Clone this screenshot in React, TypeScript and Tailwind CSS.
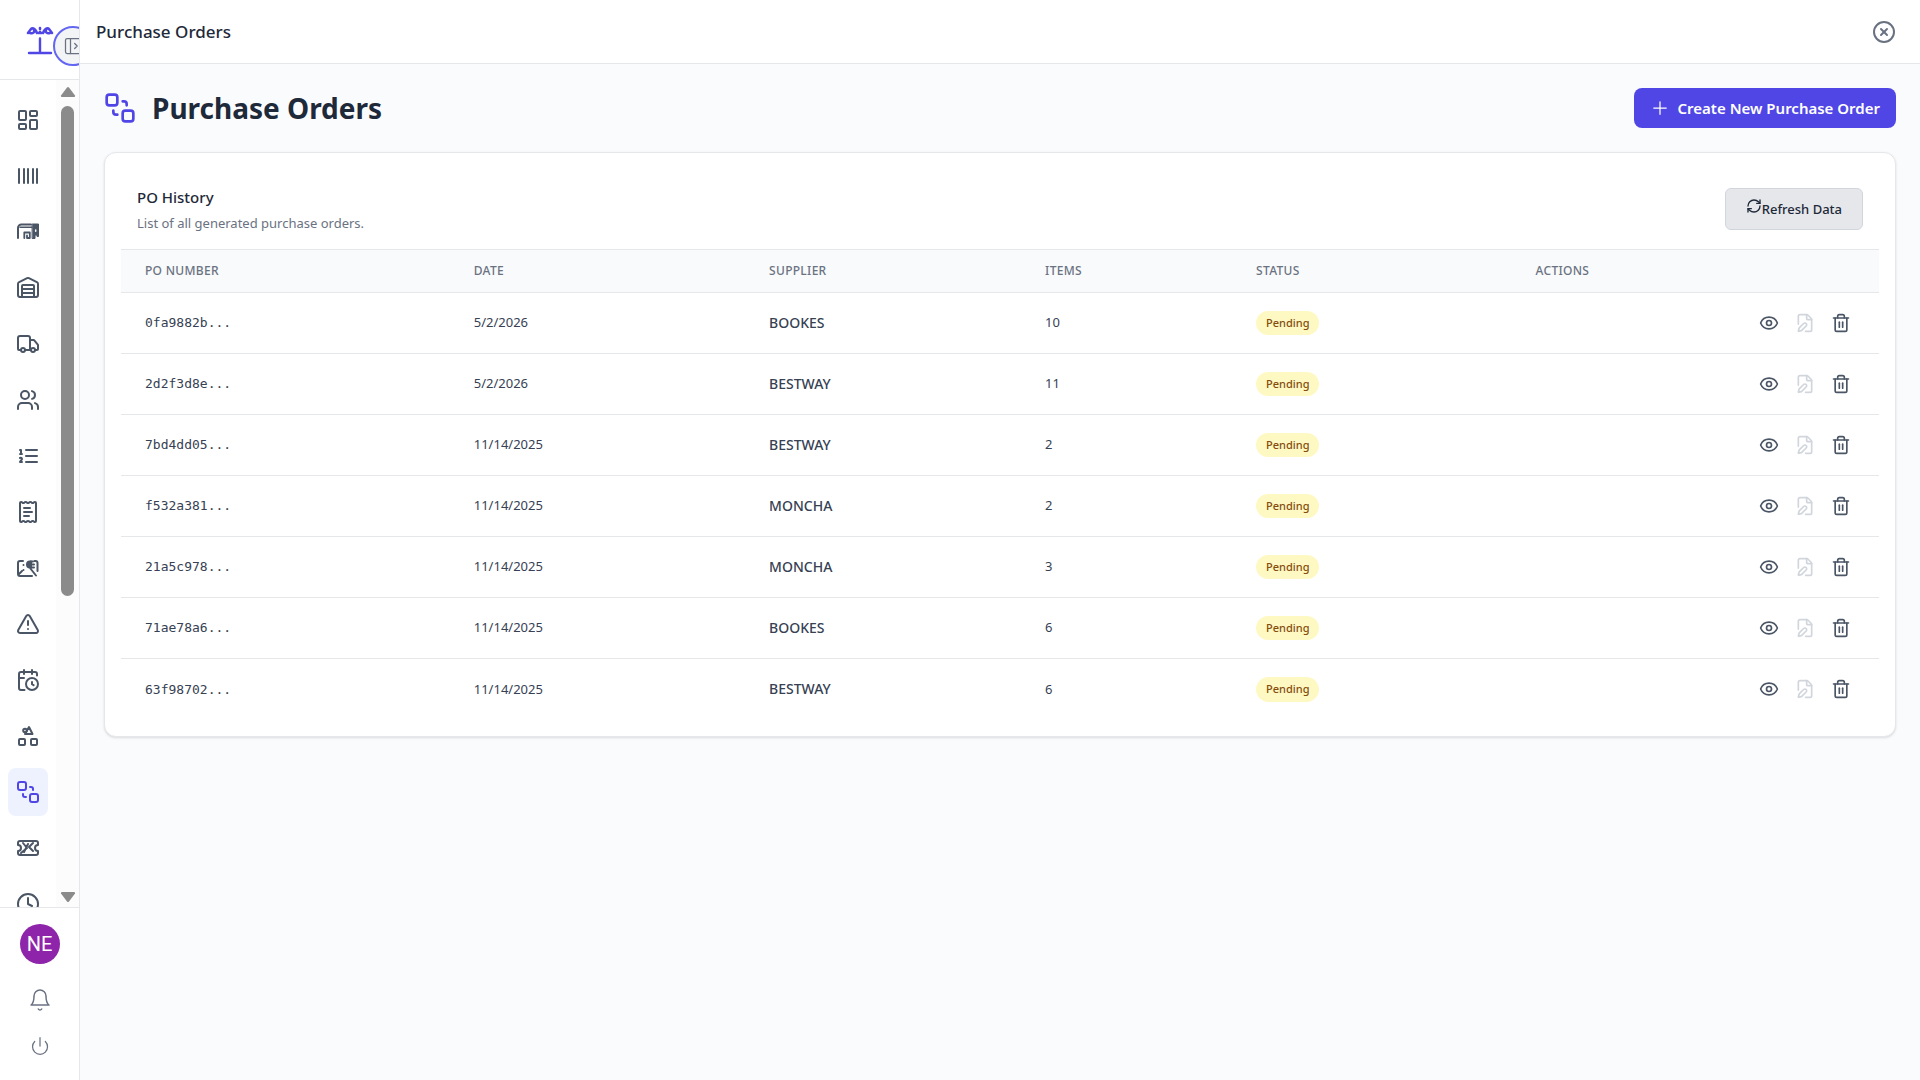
import {
  Barcode,
  CalendarClock,
  CircleX,
  Clock,
  Eye,
  FilePen,
  LayoutDashboard,
  PanelLeftOpen,
  Power,
  ReceiptText,
  RefreshCw,
  Trash2,
  TriangleAlert,
  Truck,
  Users,
  Warehouse,
} from "lucide-react";
import type { ReactNode } from "react";
import { HiOutlinePlus } from "react-icons/hi2";

type IconProps = { className?: string; strokeWidth?: number; children?: ReactNode };

function Svg({ className = "size-6", strokeWidth = 2, children }: IconProps) {
  return (
    <svg
      className={className}
      viewBox="0 0 24 24"
      fill="none"
      stroke="currentColor"
      strokeWidth={strokeWidth}
      strokeLinecap="round"
      strokeLinejoin="round"
      aria-hidden="true"
    >
      {children}
    </svg>
  );
}

function OrdersIcon({ className }: IconProps) {
  return (
    <Svg className={className}>
      <rect x="2" y="2" width="8" height="8" rx="2" />
      <rect x="14" y="14" width="8" height="8" rx="2" />
      <path d="M14 7h1a2 2 0 0 1 2 2v1" />
      <path d="M7 14v1a2 2 0 0 0 2 2h1" />
    </Svg>
  );
}

function StoreIcon() {
  return (
    <Svg>
      <path d="M2 18V8a3.5 3.5 0 0 1 3.5-3.5H15" />
      <path d="M4 7.2h12" strokeWidth="1.5" />
      <path d="M8.3 18v-5.5h5.5V18H11v-2.5" strokeWidth="1.8" />
      <path d="M16.5 4h6v12.5h-1.500V15h-2v3.5h-2.500z" fill="currentColor" strokeWidth="1" />
      <path d="M19.7 10v1.3" stroke="white" strokeWidth="1.5" />
    </Svg>
  );
}

function ListIcon() {
  return (
    <Svg>
      <path d="M10 6h11M10 12h11M10 18h11" />
      <path d="M4 6h1v4M4 10h2M6 18H4c0-1 2-2 2-3s-1-1.5-2-1" />
    </Svg>
  );
}

function CashIcon() {
  return (
    <Svg>
      <path d="M7 5H4a2 2 0 0 0-2 2v11a2 2 0 0 0 2 2h12" />
      <path d="M7.5 9v0M7.5 14v0M3 18l3-3M21.5 15V7a2 2 0 0 0-2-2h-1" />
      <path d="M17 5.5h-3a3 3 0 0 0 0 6h4M12 8.5h6M14 12l6 7.5" />
      <path d="M12 7l3-1.5V11l-3-1z" fill="currentColor" />
    </Svg>
  );
}

function ShapesIcon() {
  return (
    <Svg>
      <rect x="3" y="15" width="6" height="6" rx="1" />
      <rect x="15" y="15" width="6" height="6" rx="1" />
      <path d="M13 3l3.5 7H9z" />
      <circle cx="9" cy="6.5" r="1.8" />
    </Svg>
  );
}

function TicketIcon() {
  return (
    <Svg>
      <path d="M2 9V7a2 2 0 0 1 2-2h16a2 2 0 0 1 2 2v2a3 3 0 0 0 0 6v2a2 2 0 0 1-2 2H4a2 2 0 0 1-2-2v-2a3 3 0 0 0 0-6Z" />
      <path d="M7 7l4 5-6 5M17 7l-4 4 4 4M8 16l4-8" />
    </Svg>
  );
}

function BellIcon() {
  return (
    <Svg strokeWidth={1.5}>
      <path d="M6 8a6 6 0 0 1 12 0c0 7 3 9 3 9H3s3-2 3-9" />
      <path d="M10.3 21a1.94 1.94 0 0 0 3.4 0" />
    </Svg>
  );
}

function Logo() {
  return (
    <svg className="h-8 w-7" viewBox="0 0 28 32" fill="none" stroke="currentColor" strokeLinecap="round" aria-hidden="true">
      <path d="M3 29h22M14 14.5V29" strokeWidth="2.4" />
      <path
        d="M2 9l3-4c2-2 5 1 6 4M26 9l-3-4c-2-2-5 1-6 4M4 9c3 1 5-1 4-3M24 9c-3 1-5-1-4-3M14 4v1M13 9l1-1 1 1"
        strokeWidth="2.6"
      />
    </svg>
  );
}

const navItems = [
  { label: "Dashboard", icon: <LayoutDashboard /> },
  { label: "Products", icon: <Barcode /> },
  { label: "Stores", icon: <StoreIcon /> },
  { label: "Warehouse", icon: <Warehouse /> },
  { label: "Suppliers", icon: <Truck /> },
  { label: "Customers", icon: <Users /> },
  { label: "Orders", icon: <ListIcon /> },
  { label: "Invoices", icon: <ReceiptText /> },
  { label: "Payments", icon: <CashIcon /> },
  { label: "Alerts", icon: <TriangleAlert /> },
  { label: "Schedule", icon: <CalendarClock /> },
  { label: "Categories", icon: <ShapesIcon /> },
  { label: "Purchase Orders", icon: <OrdersIcon />, active: true },
  { label: "Coupons", icon: <TicketIcon /> },
  { label: "History", icon: <Clock /> },
];

const orders = [
  { id: "0fa9882b", date: "5/2/2026", supplier: "BOOKES", items: 10 },
  { id: "2d2f3d8e", date: "5/2/2026", supplier: "BESTWAY", items: 11 },
  { id: "7bd4dd05", date: "11/14/2025", supplier: "BESTWAY", items: 2 },
  { id: "f532a381", date: "11/14/2025", supplier: "MONCHA", items: 2 },
  { id: "21a5c978", date: "11/14/2025", supplier: "MONCHA", items: 3 },
  { id: "71ae78a6", date: "11/14/2025", supplier: "BOOKES", items: 6 },
  { id: "63f98702", date: "11/14/2025", supplier: "BESTWAY", items: 6 },
];

function Sidebar() {
  return (
    <aside className="flex w-20 shrink-0 flex-col overflow-hidden border-r border-gray-200 bg-white">
      <div className="relative flex h-20 shrink-0 items-center justify-center border-b border-gray-200 text-[#4f46e5]">
        <Logo />
        <button
          aria-label="Expand sidebar"
          className="absolute top-[26px] left-[53px] flex size-10 items-center justify-center rounded-full border-2 border-[#6366f1] bg-gray-100 text-gray-500"
        >
          <PanelLeftOpen className="size-5" strokeWidth={1.5} />
        </button>
      </div>

      <div className="flex min-h-0 flex-1">
        <nav className="flex w-14 flex-col gap-2 overflow-hidden px-2 pt-4">
          {navItems.map((item) => (
            <a
              key={item.label}
              href="#"
              aria-label={item.label}
              className={
                item.active
                  ? "flex h-12 shrink-0 items-center justify-center rounded-lg bg-indigo-50 text-[#4f46e5]"
                  : "flex h-12 shrink-0 items-center justify-center rounded-lg text-gray-600"
              }
            >
              {item.icon}
            </a>
          ))}
        </nav>
        <div className="flex flex-1 flex-col items-center bg-[#fcfcfc] pt-1.5 pb-1 text-[#8b8b8b]" aria-hidden="true">
          <svg className="h-3 w-4 shrink-0" viewBox="0 0 16 12" fill="currentColor">
            <path d="M7 1.5q1-1 2 0l6 8q.5 1.5-1 1.5H2q-1.500 0-1-1.500z" />
          </svg>
          <div className="flex min-h-0 w-full flex-1 justify-center py-2">
            <div className="h-[63%] w-[13px] rounded-full bg-[#8b8b8b]" />
          </div>
          <svg className="h-3 w-4 shrink-0" viewBox="0 0 16 12" fill="currentColor">
            <path d="M7 10.5q1 1 2 0l6-8q.5-1.500-1-1.500H2q-1.500 0-1 1.5z" />
          </svg>
        </div>
      </div>

      <div className="flex h-[173px] shrink-0 flex-col items-center border-t border-gray-200 pt-4 text-gray-500">
        <button className="flex size-10 items-center justify-center rounded-full bg-[#8e24aa] font-['Roboto',sans-serif] text-xl text-white">
          NE
        </button>
        <button aria-label="Notifications" className="mt-6">
          <BellIcon />
        </button>
        <button aria-label="Log out" className="mt-6">
          <Power className="size-5" strokeWidth={1.5} />
        </button>
      </div>
    </aside>
  );
}

function OrdersTable() {
  return (
    <table className="w-full table-fixed border-t border-gray-200 text-left text-[13px] text-gray-700">
      <thead className="bg-gray-50 text-xs tracking-wide text-gray-500 uppercase">
        <tr className="h-[43px] border-b border-gray-200">
          <th className="w-[18.7%] px-6 font-medium">PO Number</th>
          <th className="w-[16.8%] px-6 font-medium">Date</th>
          <th className="w-[15.7%] px-6 font-medium">Supplier</th>
          <th className="w-[12%] px-6 font-medium">Items</th>
          <th className="w-[15.9%] px-6 font-medium">Status</th>
          <th className="w-[20.9%] px-6 font-medium">Actions</th>
        </tr>
      </thead>
      <tbody className="divide-y divide-gray-200">
        {orders.map((order) => (
          <tr key={order.id} className="h-[61px]">
            <td className="px-6 font-['DejaVu_Sans_Mono',monospace]">{order.id}...</td>
            <td className="px-6">{order.date}</td>
            <td className="px-6 text-sm font-medium">{order.supplier}</td>
            <td className="px-6">{order.items}</td>
            <td className="px-6">
              <span className="inline-flex rounded-full bg-[#fef9c3] px-2.5 py-1 text-[11px] font-medium text-[#854d0e]">
                Pending
              </span>
            </td>
            <td className="px-6">
              <div className="flex items-center justify-end gap-4 pr-1 text-gray-600">
                <button aria-label="View order">
                  <Eye className="size-5" />
                </button>
                <button aria-label="Edit order" disabled className="text-gray-300">
                  <FilePen className="size-5" />
                </button>
                <button aria-label="Delete order">
                  <Trash2 className="size-5" />
                </button>
              </div>
            </td>
          </tr>
        ))}
      </tbody>
    </table>
  );
}

export default function App() {
  return (
    <div className="flex h-screen bg-[#fafbfd] font-['Noto_Sans',sans-serif] text-gray-800">
      <Sidebar />

      <div className="flex min-w-0 flex-1 flex-col">
        <header className="flex h-16 shrink-0 items-center justify-between border-b border-gray-200 bg-white pr-6 pl-4">
          <h2 className="text-[17px] font-medium">Purchase Orders</h2>
          <button aria-label="Close" className="text-gray-500">
            <CircleX className="size-6" />
          </button>
        </header>

        <main className="flex-1 overflow-auto p-6">
          <div className="mb-6 flex items-center justify-between">
            <h1 className="flex items-center gap-4 text-[28px] leading-10 font-bold">
              <OrdersIcon className="size-8 text-[#4f46e5]" />
              Purchase Orders
            </h1>
            <button className="flex h-10 items-center gap-2 rounded-lg bg-[#4f46e5] px-4 text-[15px] font-semibold text-white">
              <HiOutlinePlus className="size-5" />
              Create New Purchase Order
            </button>
          </div>

          <section className="rounded-xl border border-gray-200 bg-white p-4 shadow-sm">
            <div className="flex items-center justify-between p-4">
              <div>
                <h3 className="text-[15px] leading-6 font-medium">PO History</h3>
                <p className="mt-1 text-[13px] leading-5 text-gray-500">List of all generated purchase orders.</p>
              </div>
              <button className="h-[42px] rounded-md border border-gray-300 bg-gray-200 px-5 text-[13px] font-medium">
                <RefreshCw className="inline size-4 align-baseline" />
                Refresh Data
              </button>
            </div>
            <OrdersTable />
          </section>
        </main>
      </div>
    </div>
  );
}
